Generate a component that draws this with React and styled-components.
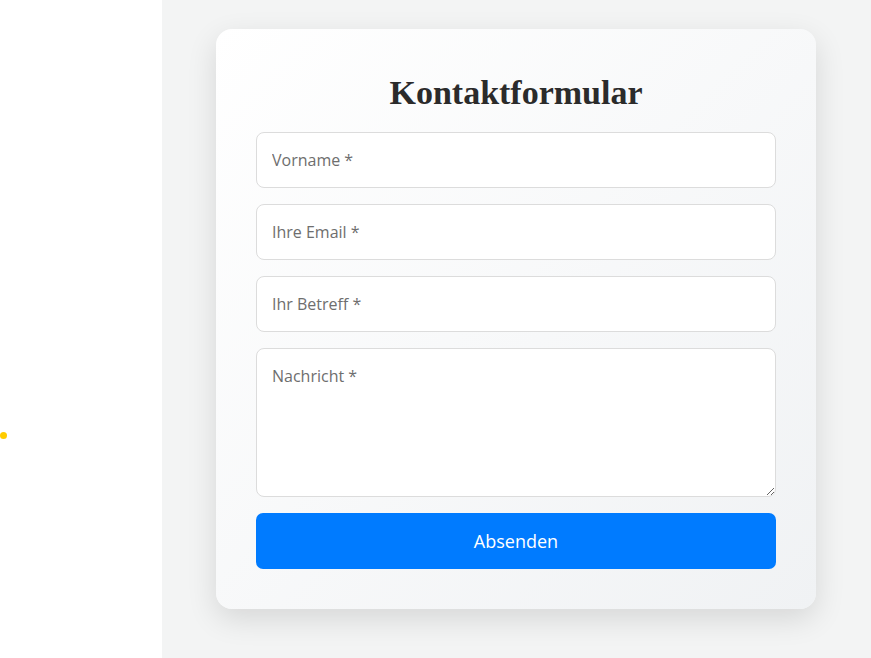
import React from "react";
import styled, { createGlobalStyle } from "styled-components";

const GlobalStyle = createGlobalStyle`
  html, body { margin: 0; padding: 0; height: 100%; }
  body { font-family: "Poppins", "Open Sans", "Noto Sans", sans-serif; }
  #root { height: 100%; }
`;

const Page = styled.div`
  display: flex;
  height: 658px;
  width: 100%;
  overflow: hidden;
`;

const Side = styled.aside`
  position: relative;
  width: 162px;
  flex-shrink: 0;
  background: #fff;
`;

const Dot = styled.span`
  position: absolute;
  left: 0;
  top: 432px;
  width: 7px;
  height: 7px;
  border-radius: 50%;
  background: #ffcc00;
`;

const Main = styled.main`
  flex: 1;
  background: #f3f4f4;
  padding: 29px 0 0 54px;
`;

const Card = styled.form`
  width: 600px;
  box-sizing: border-box;
  padding: 40px;
  border-radius: 16px;
  background: linear-gradient(135deg, #ffffff 0%, #f0f2f4 100%);
  box-shadow: 0 10px 30px rgba(0, 0, 0, 0.12);
  display: flex;
  flex-direction: column;
  gap: 16px;
`;

const Title = styled.h2`
  margin: 0;
  text-align: center;
  font-family: "Liberation Serif", "DejaVu Serif", serif;
  font-weight: 700;
  font-size: 34px;
  line-height: 47px;
  color: #2b2b2b;
`;

const field = `
  width: 100%;
  box-sizing: border-box;
  border: 1px solid #dcdcdc;
  border-radius: 8px;
  background: #fff;
  padding: 15px 15px;
  font-family: "Open Sans", "Noto Sans", sans-serif;
  font-size: 16px;
  color: #333;
  outline: none;
  &::placeholder { color: #6e6e6e; }
`;

const Input = styled.input`
  ${field}
  height: 56px;
`;

const Area = styled.textarea`
  ${field}
  height: 149px;
  resize: vertical;
  display: block;
  line-height: 24px;
`;

const Button = styled.button`
  height: 56px;
  border: none;
  border-radius: 7px;
  background: #007bff;
  color: #fff;
  font-family: "Open Sans", "Noto Sans", sans-serif;
  font-size: 18px;
  cursor: pointer;
`;

export default function App() {
  return (
    <>
      <GlobalStyle />
      <Page>
        <Side>
          <Dot />
        </Side>
        <Main>
          <Card onSubmit={(e) => e.preventDefault()}>
            <Title>Kontaktformular</Title>
            <Input placeholder="Vorname *" />
            <Input placeholder="Ihre Email *" />
            <Input placeholder="Ihr Betreff *" />
            <Area placeholder="Nachricht *" />
            <Button type="submit">Absenden</Button>
          </Card>
        </Main>
      </Page>
    </>
  );
}
